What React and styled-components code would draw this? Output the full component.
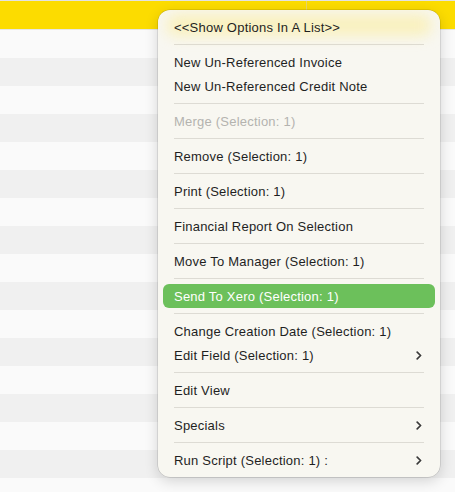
import React from "react";
import styled, { createGlobalStyle } from "styled-components";

const Global = createGlobalStyle`
  html, body { margin: 0; padding: 0; }
  body { font-family: "Liberation Sans", Arial, sans-serif; background: #fafafa; }
  #root { width: 455px; height: 492px; overflow: hidden; }
`;

const Page = styled.div`
  position: relative;
  width: 455px;
  height: 492px;
  overflow: hidden;
  background: #fafafa;
`;

const Header = styled.div`
  display: grid;
  grid-template-columns: 307px 1fr;
  height: 28px;
  border-top: 1px solid #e2e2e2;
  border-bottom: 1px solid #e6e6e6;
  background: #fcdc00;
`;

const HeaderCell = styled.div`
  border-right: ${(p) => (p.$divider ? "1px solid #e8d46a" : "none")};
`;

const Row = styled.div`
  height: 28px;
  background: ${(p) => (p.$alt ? "#f0f0f0" : "#fafafa")};
`;

const Menu = styled.div`
  position: absolute;
  left: 158px;
  top: 10px;
  width: 282px;
  box-sizing: border-box;
  padding: 5px 0;
  background: #f8f7f1;
  border-radius: 12px;
  box-shadow: 0 0 0 0.5px rgba(0, 0, 0, 0.18), 0 4px 14px rgba(0, 0, 0, 0.16);
  overflow: hidden;
  &::before {
    content: "";
    position: absolute;
    left: 8px;
    right: 8px;
    top: 4px;
    height: 22px;
    background: rgba(252, 236, 140, 0.5);
    filter: blur(7px);
    border-radius: 12px;
  }
`;

const Item = styled.div`
  position: relative;
  display: flex;
  align-items: center;
  justify-content: space-between;
  height: 24px;
  margin: 0 5px;
  padding: 0 13px 0 11px;
  border-radius: 6px;
  font-size: 13px;
  letter-spacing: 0.22px;
  color: ${(p) => (p.$disabled ? "#b4b3af" : p.$active ? "#ffffff" : "#1f1f1f")};
  background: ${(p) => (p.$active ? "#6cc05b" : "transparent")};
  white-space: nowrap;
`;

const Separator = styled.div`
  height: 1px;
  margin: 5px 16px;
  background: #dddbd4;
`;

const Chevron = () => (
  <svg width="6" height="9" viewBox="0 0 6 9">
    <path d="M1.2 1.2 L4.6 4.5 L1.2 7.8" fill="none" stroke="#3a3a3a" strokeWidth="1.7" strokeLinecap="round" strokeLinejoin="round" />
  </svg>
);

const groups = [
  [{ label: "<<Show Options In A List>>" }],
  [{ label: "New Un-Referenced Invoice" }, { label: "New Un-Referenced Credit Note" }],
  [{ label: "Merge (Selection: 1)", disabled: true }],
  [{ label: "Remove (Selection: 1)" }],
  [{ label: "Print (Selection: 1)" }],
  [{ label: "Financial Report On Selection" }],
  [{ label: "Move To Manager (Selection: 1)" }],
  [{ label: "Send To Xero (Selection: 1)", active: true }],
  [{ label: "Change Creation Date (Selection: 1)" }, { label: "Edit Field (Selection: 1)", sub: true }],
  [{ label: "Edit View" }],
  [{ label: "Specials", sub: true }],
  [{ label: "Run Script (Selection: 1) :", sub: true }],
];

export default function App() {
  const rows = Array.from({ length: 17 }, (_, i) => i);
  return (
    <Page>
      <Global />
      <Header>
        <HeaderCell $divider />
        <HeaderCell />
      </Header>
      {rows.map((i) => (
        <Row key={i} $alt={i % 2 === 1} />
      ))}
      <Menu>
        {groups.map((g, gi) => (
          <React.Fragment key={gi}>
            {gi > 0 && <Separator />}
            {g.map((it) => (
              <Item key={it.label} $disabled={it.disabled} $active={it.active}>
                <span>{it.label}</span>
                {it.sub && <Chevron />}
              </Item>
            ))}
          </React.Fragment>
        ))}
      </Menu>
    </Page>
  );
}
